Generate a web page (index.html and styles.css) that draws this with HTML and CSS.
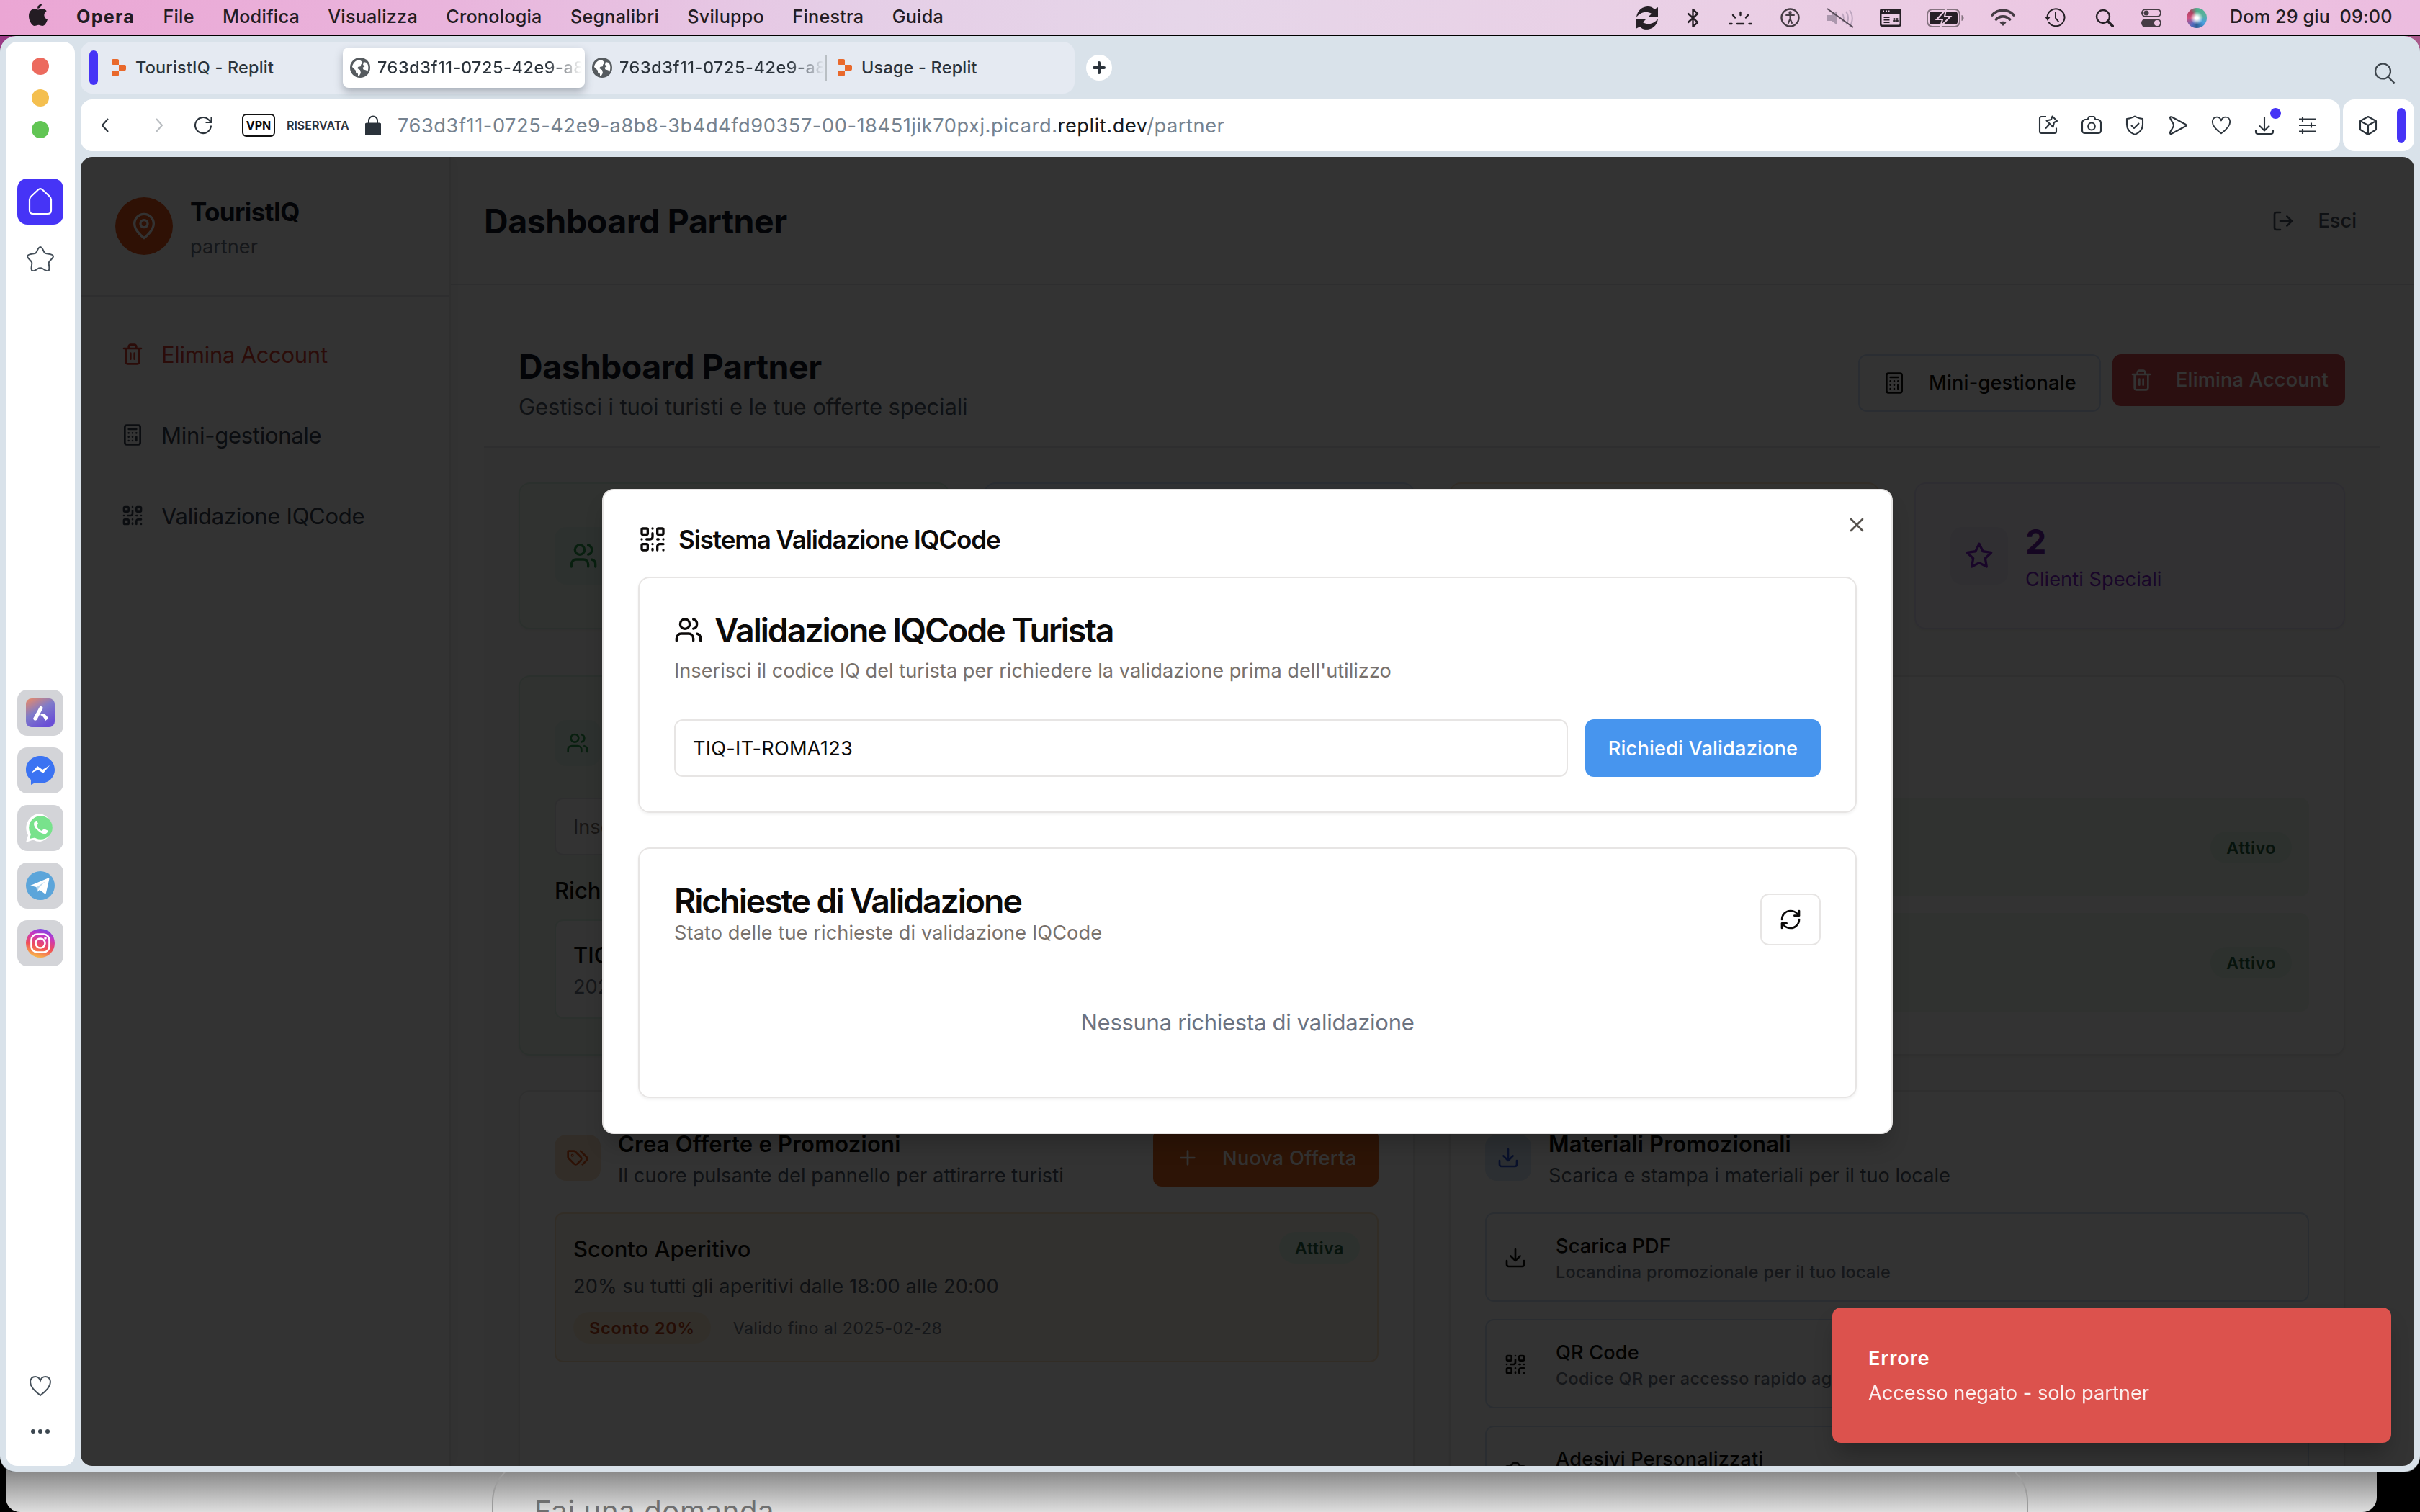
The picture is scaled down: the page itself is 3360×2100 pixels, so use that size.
FILE: index.html
```html
<!DOCTYPE html>
<html lang="it">
<head>
<meta charset="utf-8">
<title>Dashboard Partner</title>
<link rel="stylesheet" href="styles.css">
</head>
<body>
<svg class="defs" aria-hidden="true">
  <symbol id="qr" viewBox="0 0 24 24"><rect x="3" y="3" width="5" height="5" rx="1"/><rect x="16" y="3" width="5" height="5" rx="1"/><rect x="3" y="16" width="5" height="5" rx="1"/><path d="M21 16h-3a2 2 0 0 0-2 2v3M21 21v.01M12 7v3a2 2 0 0 1-2 2H7M3 12h.01M12 3h.01M12 16v.01M16 12h1M21 12v.01M12 21v-1"/></symbol>
  <symbol id="users" viewBox="0 0 24 24"><path d="M16 21v-2a4 4 0 0 0-4-4H6a4 4 0 0 0-4 4v2"/><circle cx="9" cy="7" r="4"/><path d="M22 21v-2a4 4 0 0 0-3-3.87M16 3.13a4 4 0 0 1 0 7.75"/></symbol>
  <symbol id="trash" viewBox="0 0 24 24"><path d="M3 6h18M19 6v14c0 1-1 2-2 2H7c-1 0-2-1-2-2V6M8 6V4c0-1 1-2 2-2h4c1 0 2 1 2 2v2M10 11v6M14 11v6"/></symbol>
  <symbol id="calc" viewBox="0 0 24 24"><rect x="4" y="2" width="16" height="20" rx="2"/><path d="M8 6h8M16 14v4M16 10h.01M12 10h.01M8 10h.01M12 14h.01M8 14h.01M12 18h.01M8 18h.01"/></symbol>
  <symbol id="tags" viewBox="0 0 24 24"><path d="m15 5 6.3 6.3a2.4 2.4 0 0 1 0 3.4L17 19"/><path d="M9.586 5.586A2 2 0 0 0 8.172 5H3a1 1 0 0 0-1 1v5.172a2 2 0 0 0 .586 1.414L8.29 18.29a2.426 2.426 0 0 0 3.42 0l3.58-3.58a2.426 2.426 0 0 0 0-3.42z"/><circle cx="6.5" cy="9.5" r=".5"/></symbol>
  <symbol id="download" viewBox="0 0 24 24"><path d="M21 15v4a2 2 0 0 1-2 2H5a2 2 0 0 1-2-2v-4M7 10l5 5 5-5M12 15V3"/></symbol>
  <symbol id="logout" viewBox="0 0 24 24"><path d="M9 21H5a2 2 0 0 1-2-2V5a2 2 0 0 1 2-2h4M16 17l5-5-5-5M21 12H9"/></symbol>
  <symbol id="pin" viewBox="0 0 24 24"><path d="M20 10c0 6-8 12-8 12s-8-6-8-12a8 8 0 0 1 16 0Z"/><circle cx="12" cy="10" r="3"/></symbol>
  <symbol id="refresh" viewBox="0 0 24 24"><path d="M3 12a9 9 0 0 1 9-9 9.75 9.75 0 0 1 6.74 2.74L21 8M21 3v5h-5M21 12a9 9 0 0 1-9 9 9.75 9.75 0 0 1-6.74-2.74L3 16M8 16H3v5"/></symbol>
  <symbol id="star" viewBox="0 0 24 24"><path d="M12 2l3.09 6.26L22 9.27l-5 4.87 1.18 6.88L12 17.77l-6.18 3.25L7 14.14 2 9.27l6.91-1.01z"/></symbol>
  <symbol id="camera" viewBox="0 0 24 24"><path d="M14.5 4h-5L7 7H4a2 2 0 0 0-2 2v9a2 2 0 0 0 2 2h16a2 2 0 0 0 2-2V9a2 2 0 0 0-2-2h-3z"/><circle cx="12" cy="13" r="3"/></symbol>
  <symbol id="plus" viewBox="0 0 24 24"><path d="M5 12h14M12 5v14"/></symbol>
  <symbol id="close" viewBox="0 0 24 24"><path d="M18 6 6 18M6 6l12 12"/></symbol>
  <symbol id="heart" viewBox="0 0 32 32"><path d="M16 29C8 23 2 17 2 10.500C2 6 5 3 9 3c3.500 0 6 2.500 7 5.500C17 5.500 19.500 3 23 3c4 0 7 3 7 7.500C30 17 24 23 16 29z"/></symbol>
  <symbol id="globe" viewBox="0 0 28 28"><circle cx="14" cy="14" r="14" fill="#565b5f"/><path d="M13 3C8 3.500 3.500 8 3 13l5 5v2.500l3 2v3l1.500.3 2.500-4.500-1-4-4-2.500 1.500-2 3-.5 1-3 2-2-2-2.500z M19 6l-1 4 2.500 2-3 2 1 2.500 4 1 1.500 2.500C26 16 26 10 23 7z" fill="#fff"/></symbol>
  <symbol id="replit" viewBox="0 0 20 24"><path d="M0 2a2 2 0 0 1 2-2h6a2 2 0 0 1 2 2v6H2a2 2 0 0 1-2-2zM10 8h8a2 2 0 0 1 2 2v4a2 2 0 0 1-2 2h-8zM0 18a2 2 0 0 1 2-2h8v6a2 2 0 0 1-2 2H2a2 2 0 0 1-2-2z" fill="#e9692c"/></symbol>
</svg>

<div class="back-window"><div class="prompt">Fai una domanda</div></div>

<header class="menubar">
  <svg class="apple" viewBox="0 0 26 31"><path d="M18 0c.3 3.500-2.800 6.800-5.800 6.800C11.800 3.500 15 .4 18 0zM13 8.600c1.400 0 3.200-1.500 5.800-1.500 2.500 0 4.700 1.300 5.900 3.200-5 3-4.200 9.800 1.300 11.900C24.500 26.500 22 31 19 31c-2 0-2.900-1.300-5.400-1.300C11 29.700 10 31 8 31 4.500 31 0 24 0 17.300 0 11 3.900 7.300 8 7.300c2.200 0 3.700 1.300 5 1.300z"/></svg>
  <nav class="menus"><b>Opera</b><span>File</span><span>Modifica</span><span>Visualizza</span><span>Cronologia</span><span>Segnalibri</span><span>Sviluppo</span><span>Finestra</span><span>Guida</span></nav>
  <div class="status">
    <svg width="30" height="32" viewBox="0 0 30 32"><path d="M0 15C1 5 9 0 16 0c4 0 7 1.500 9 4l5-3v13H17l4-4C15 6 6 7 0 15zM30 17c-1 10-9 15-16 15-4 0-7-1.500-9-4l-5 2.500V18h13l-4 4c6 4 15 3 21-5z"/></svg>
    <svg width="17" height="28" viewBox="0 0 17 28" class="ln"><path d="M2 8l13 12-6.500 6V2L15 8 2 20"/></svg>
    <svg width="33" height="20" viewBox="0 0 33 20" class="ln"><path d="M1.500 18h3M12 18h9M28.500 18h3M16.500 2v4M6 6l3 3.500M27 6l-3 3.500"/></svg>
    <svg width="27" height="27" viewBox="0 0 27 27" class="ln soft"><circle cx="13.500" cy="13.500" r="12"/><path d="M8 10l11 0M13.500 10v5l-2.500 6M13.500 15l2.500 6" stroke-width="2"/><circle cx="13.500" cy="6.500" r="1"/></svg>
    <svg width="38" height="28" viewBox="0 0 38 28"><path d="M0 10h7l8-6v20l-8-6H0z" fill="#ab97ad"/><path d="M22 8c2 3 2 8 0 12M27 5c4 5 4 13 0 18M32 3c5 7 5 16 0 23" fill="none" stroke="#bda6bf" stroke-width="2"/><path d="M1 1l36 26" stroke="#554a57" stroke-width="2"/></svg>
    <svg width="30" height="25" viewBox="0 0 30 25"><path fill-rule="evenodd" d="M3 0h24a3 3 0 0 1 3 3v19a3 3 0 0 1-3 3H3a3 3 0 0 1-3-3V3a3 3 0 0 1 3-3zM2.500 8v13.500a1 1 0 0 0 1 1h23a1 1 0 0 0 1-1V8z"/><path d="M5.500 12h8M5.500 15.500h8M5.500 19h8" stroke="#262026" stroke-width="1.800"/><path d="M20 13v5M24 13v5M18 14.500h8M18 17h8" stroke="#262026" stroke-width="1.500"/><path d="M4 3.500h2M8 3.500h2M12 3.500h1.500" stroke="#ecd0e6" stroke-width="2"/></svg>
    <svg width="52" height="26" viewBox="0 0 52 26"><rect x="1" y="1" width="45" height="24" rx="7" fill="none" stroke="#84737f" stroke-width="2"/><rect x="4" y="4" width="39" height="18" rx="4"/><path d="M48.500 9v8c4-1 4-7 0-8z" fill="#84737f"/><path d="M27 1L14 15h8l-3 10 14-14h-8z" stroke="#ebcde4" stroke-width="2"/></svg>
    <svg width="34" height="25" viewBox="0 0 34 25" class="ln soft wifi"><path d="M2 9c8-9 22-9 30 0M7.500 15c5-5.500 14-5.500 19 0"/><path d="M12.500 19.500c3-2.500 6-2.500 9 0L17 24z" fill="#453c44" stroke="none"/></svg>
    <svg width="29" height="27" viewBox="0 0 29 27" class="ln"><path d="M3.500 13.500a12 12 0 1 1 2 6.500M15 6v8l4 5" stroke-width="2"/><path d="M0 12h8l-4 6z" fill="#262026" stroke="none"/></svg>
    <svg width="26" height="26" viewBox="0 0 26 26" class="ln"><circle cx="11" cy="11" r="9"/><path d="M17.500 17.500l7 7" stroke-width="3.500"/></svg>
    <svg width="28" height="26" viewBox="0 0 28 26"><rect x="1" y="1" width="26" height="10" rx="5" fill="none" stroke="#453c44" stroke-width="2"/><circle cx="7" cy="6" r="3.500" fill="#453c44"/><rect y="14" width="28" height="12" rx="6" fill="#453c44"/><circle cx="22" cy="20" r="4" fill="#ecc5e1"/></svg>
    <i class="siri"></i>
  </div>
  <time class="clock">Dom 29 giu&nbsp; 09:00</time>
</header>

<div class="browser">
  <aside class="rail">
    <i class="light red"></i><i class="light yellow"></i><i class="light green"></i>
    <div class="home"><svg width="34" height="38" viewBox="0 0 34 38"><path d="M2 16.500C2 13 4 12 6 10l8-7.500c2-1.800 4-1.800 6 0L28 10c2 2 4 3 4 6.500V31c0 3.500-1.500 5-5 5H7c-3.500 0-5-1.500-5-5z"/></svg></div>
    <svg class="fav" width="38" height="36" viewBox="0 0 38 36"><path d="M19 2c2 0 3 2 4.500 5.500 1.500 3.500 2 3.500 6 4 5.500.7 7.500 1.500 7.500 3.500s-2 3.500-4.500 6c-2 2-2 3-1.500 6.500.6 4 1 6.500-1 7.500s-4-.5-7-2.500c-3-1.800-5-1.800-8 0-3 2-5 3.500-7 2.500s-1.600-3.500-1-7.500C7.500 24 7.500 23 5.500 21 3 18.500 1 17 1 15s2-2.800 7.500-3.500c4-.5 4.500-.5 6-4C16 4 17 2 19 2z"/></svg>
    <div class="apps">
      <span class="app"><svg viewBox="0 0 40 40"><defs><linearGradient id="aria" x1="0" y1="0" x2=".6" y2="1"><stop offset="0" stop-color="#ee8a62"/><stop offset=".5" stop-color="#7f7bc9"/><stop offset="1" stop-color="#6a4fd6"/></linearGradient></defs><rect width="40" height="40" rx="8" fill="url(#aria)"/><path d="M10 28L20 10l4 3-9 17q-4 2-5-2zM22 21q6 0 9 7l-4 3q-3-7-7-8z" fill="#fff"/></svg></span>
      <span class="app"><svg viewBox="0 0 40 40"><path d="M20 0C9 0 0 8 0 19c0 6 2.500 10.500 7 14v7l6-3c2 .7 4.500 1 7 1 11 0 20-8 20-19S31 0 20 0z" fill="#3b73f2"/><path d="M7 24l9-10 7 5 10-6-9 11-7-5z" fill="#fff"/></svg></span>
      <span class="app"><svg viewBox="0 0 40 40"><path d="M20 0a20 20 0 0 1 0 39c-4 0-7-.8-10-2.500L0 40l3-10A20 20 0 0 1 20 0z" fill="#fff"/><circle cx="20.500" cy="19.500" r="16.300" fill="#78e28c"/><path d="M5 35l3-10 7 8z" fill="#78e28c"/><path d="M14 10c-4 2-4 7 1 12s11 8 14 5c2-2 1-4 0-4l-4-2-3 3c-3-1-6-4-7-7l2-3-2-4z" fill="#fff"/></svg></span>
      <span class="app"><svg viewBox="0 0 40 40"><circle cx="20" cy="20" r="20" fill="#5ca5da"/><path d="M6 20L31 9.500c1 0 1.500.5 1.300 1.500L28 30c-.5 1.500-1 1.500-2.500.7L19 26l-3.500 3-1-7z" fill="#fff"/><path d="M15 22l12-8-9 9-2 6z" fill="#b9d8ee"/></svg></span>
      <span class="app"><svg viewBox="0 0 40 40"><defs><linearGradient id="insta" x1=".3" y1="1" x2=".6" y2="0"><stop offset="0" stop-color="#f8c048"/><stop offset=".4" stop-color="#f04e58"/><stop offset=".75" stop-color="#c838c0"/><stop offset="1" stop-color="#7b46e8"/></linearGradient></defs><circle cx="20" cy="20" r="20" fill="url(#insta)"/><g fill="none" stroke="#fff" stroke-width="2.600"><rect x="7.500" y="7.500" width="25" height="25" rx="8"/><circle cx="20" cy="20" r="6.500"/></g><circle cx="27" cy="13" r="1.800" fill="#fff"/></svg></span>
    </div>
    <svg class="rail-heart" width="34" height="32"><use href="#heart"/></svg>
    <svg class="dots" width="26" height="6"><circle cx="3" cy="3" r="3"/><circle cx="13" cy="3" r="3"/><circle cx="23" cy="3" r="3"/></svg>
  </aside>

  <div class="stage">
    <div class="tabrow">
      <div class="tabs">
        <i class="space-bar"></i>
        <div class="tab first"><svg width="20" height="24"><use href="#replit"/></svg><span>TouristIQ - Replit</span></div>
        <div class="tab active"><svg width="28" height="28"><use href="#globe"/></svg><span class="host">763d3f11-0725-42e9-a8</span></div>
        <div class="tab second"><svg width="28" height="28"><use href="#globe"/></svg><span class="host">763d3f11-0725-42e9-a8</span></div>
        <div class="tab last"><svg width="20" height="24"><use href="#replit"/></svg><span>Usage - Replit</span></div>
      </div>
      <button class="newtab"><svg width="18" height="18" viewBox="0 0 18 18"><path d="M9 2v14M2 9h14"/></svg></button>
      <svg class="tabsearch" width="30" height="30" viewBox="0 0 30 30"><circle cx="12.500" cy="12" r="10.500"/><path d="M20 20l8.500 8.500"/></svg>
    </div>

    <div class="addressrow">
      <div class="address">
        <svg class="nav-back" viewBox="0 0 28 28"><path d="M18 5l-8 9 8 9"/></svg>
        <svg class="nav-fwd" viewBox="0 0 28 28"><path d="M10 5l8 9-8 9"/></svg>
        <svg class="nav-reload" viewBox="0 0 28 28"><path d="M25 14.500A11 11 0 1 1 22 6.500l3 3M25.500 2v8h-8"/></svg>
        <span class="vpn">VPN</span><span class="private">RISERVATA</span>
        <svg class="lock" viewBox="0 0 22 28"><path d="M5 13V7.500a6 6 0 0 1 12 0V13" fill="none" stroke="#2b333b" stroke-width="2"/><rect y="11.500" width="22" height="16" rx="3" fill="#2b333b"/></svg>
        <span class="url">763d3f11-0725-42e9-a8b8-3b4d4fd90357-00-18451jik70pxj.picard.<em>replit.dev</em>/partner</span>
        <div class="tools">
          <svg viewBox="0 0 28 28"><path d="M11 2H4.500Q2 2 2 4.500v18Q2 25 4.500 25h18q2.500 0 2.500-2.500V17.500M19.500 1.500l6.500 6.500-4 2-1.500 6.500-9-9L18 6zM15.500 12.500L10 18.500"/></svg>
          <svg viewBox="0 0 28 28"><path d="M8.500 6l2-4h7l2 4H23q4 1 4 5v10q0 4-4 4H5q-4 0-4-4V11q0-4 4-5z"/><ellipse cx="14" cy="15.500" rx="4.800" ry="5"/></svg>
          <svg viewBox="0 0 28 28"><path d="M14 1.500c3 2 6.500 3 11 3.500v8c0 7-5 11.500-11 14C8 24.500 3 20 3 13V5c4.500-.5 8-1.500 11-3.500z"/><path d="M9 14l4 4 7-7"/></svg>
          <svg viewBox="0 0 28 28"><path d="M3 3.500c0-1.500 1-1.500 2.500-1L25 13q1.500 1 0 2L5.500 25.500C3.500 26.500 3 26 3 24.500c.5-4 5-7 5-10.500S3.500 7 3 3.500z"/></svg>
          <svg viewBox="0 0 32 32"><use href="#heart"/></svg>
          <span class="dl"><svg viewBox="0 0 28 28"><path d="M14 2v19M7 14.500l7 7 7-7M2 20v3q0 3 3 3h18q3 0 3-3v-3"/></svg><i></i></span>
          <svg viewBox="0 0 28 28"><path d="M2 5.500h24M2 14h24M2 22.500h24M7 2v7M19 10.500v7M7 19v7"/></svg>
        </div>
      </div>
      <div class="sidepanel">
        <svg width="26" height="28" viewBox="0 0 26 28"><path d="M13 2l11 6v12l-11 7L2 20V8zM2 8l11 6 11-6M13 14v13"/></svg>
        <i class="space-bar"></i>
      </div>
    </div>

    <div class="page">
      <aside class="sidebar">
        <div class="brand">
          <span class="logo"><svg class="ic i40"><use href="#pin"/></svg></span>
          <div><div class="brand-name">TouristIQ</div><div class="brand-role">partner</div></div>
        </div>
        <nav class="side-nav">
          <a class="danger"><svg class="ic i32"><use href="#trash"/></svg>Elimina Account</a>
          <a><svg class="ic i32"><use href="#calc"/></svg>Mini-gestionale</a>
          <a><svg class="ic i32"><use href="#qr"/></svg>Validazione IQCode</a>
        </nav>
      </aside>
      <main class="main">
        <div class="topbar"><h1>Dashboard Partner</h1><div class="logout"><svg class="ic i32"><use href="#logout"/></svg>Esci</div></div>
        <div class="panel">
          <div class="panel-head">
            <div><h2>Dashboard Partner</h2><p>Gestisci i tuoi turisti e le tue offerte speciali</p></div>
            <div class="actions">
              <button class="btn outline"><svg class="ic i32"><use href="#calc"/></svg>Mini-gestionale</button>
              <button class="btn destructive"><svg class="ic i32"><use href="#trash"/></svg>Elimina Account</button>
            </div>
          </div>
          <div class="panel-body">
            <div class="stats">
              <div class="stat green"><span class="tile t80"><svg class="ic i40"><use href="#users"/></svg></span></div>
              <div class="stat blue"></div>
              <div class="stat orange"></div>
              <div class="stat purple"><span class="tile t80"><svg class="ic i40"><use href="#star"/></svg></span><div><div class="num">2</div><div class="lbl">Clienti Speciali</div></div></div>
            </div>
            <div class="grid">
              <section class="card greencard">
                <div class="card-head"><span class="tile"><svg class="ic i32"><use href="#users"/></svg></span></div>
                <div class="field">Inserisci</div>
                <div class="field-title">Richieste</div>
                <div class="request"><div>TIQ-IT</div><small>2025</small></div>
              </section>
              <section class="card">
                <div class="card-head"></div>
                <div class="rows"><div class="row"><span class="pill ok">Attivo</span></div><div class="row"><span class="pill ok">Attivo</span></div></div>
              </section>
              <section class="card tall">
                <div class="card-head"><span class="tile orange"><svg class="ic i32"><use href="#tags"/></svg></span><div class="heads"><h3>Crea Offerte e Promozioni</h3><p class="wide">Il cuore pulsante del pannello per attirarre turisti</p></div><button class="btn primary"><svg class="ic i32"><use href="#plus"/></svg>Nuova Offerta</button></div>
                <div class="offer">
                  <div class="offer-top"><div class="offer-name">Sconto Aperitivo</div><span class="pill ok">Attiva</span></div>
                  <p>20% su tutti gli aperitivi dalle 18:00 alle 20:00</p>
                  <div class="offer-meta"><span class="pill discount">Sconto 20%</span><span>Valido fino al 2025-02-28</span></div>
                </div>
              </section>
              <section class="card tall">
                <div class="card-head"><span class="tile bluetile"><svg class="ic i32"><use href="#download"/></svg></span><div class="heads"><h3>Materiali Promozionali</h3><p>Scarica e stampa i materiali per il tuo locale</p></div></div>
                <div class="materials">
                  <div class="material"><svg class="ic i32"><use href="#download"/></svg><div><b>Scarica PDF</b><small>Locandina promozionale per il tuo locale</small></div></div>
                  <div class="material"><svg class="ic i32"><use href="#qr"/></svg><div><b>QR Code</b><small>Codice QR per accesso rapido agli sconti</small></div></div>
                  <div class="material"><svg class="ic i32"><use href="#camera"/></svg><div><b>Adesivi Personalizzati</b><small>&nbsp;</small></div></div>
                </div>
              </section>
            </div>
          </div>
        </div>
      </main>

      <div class="overlay"></div>
      <div class="dialog">
        <svg class="ic i32 x"><use href="#close"/></svg>
        <div class="dialog-title"><svg class="ic i40"><use href="#qr"/></svg>Sistema Validazione IQCode</div>
        <section class="box">
          <h4><svg class="ic i40"><use href="#users"/></svg>Validazione IQCode Turista</h4>
          <p class="mt">Inserisci il codice IQ del turista per richiedere la validazione prima dell'utilizzo</p>
          <div class="form"><div class="input">TIQ-IT-ROMA123</div><button class="validate">Richiedi Validazione</button></div>
        </section>
        <section class="box second-box">
          <div class="box-head"><div><h4>Richieste di Validazione</h4><p>Stato delle tue richieste di validazione IQCode</p></div><button class="reload"><svg class="ic i32"><use href="#refresh"/></svg></button></div>
          <div class="empty">Nessuna richiesta di validazione</div>
        </section>
      </div>
      <div class="toast"><b>Errore</b><span>Accesso negato - solo partner</span></div>
    </div>
  </div>
</div>
</body>
</html>
```
FILE: styles.css
```css
* { box-sizing: border-box; margin: 0; padding: 0; }
body { width: 3360px; height: 2100px; overflow: hidden; position: relative; background: linear-gradient(90deg, #9a3a86, #000 600px, #000 2900px, #a9588a 3350px) top / 100% 100px no-repeat, #000; font-family: Inter, "Liberation Sans", sans-serif; color: #0c0a09; }
button { font: inherit; border: 0; background: none; color: inherit; }
svg { flex: none; display: block; }
.defs { position: absolute; width: 0; height: 0; }
.ic { fill: none; stroke: currentColor; stroke-width: 2; stroke-linecap: round; stroke-linejoin: round; }
.i32 { width: 32px; height: 32px; }
.i40 { width: 40px; height: 40px; }

/* window peeking out at the bottom of the desktop */
.back-window { position: absolute; left: 8px; top: 1900px; width: 3292px; height: 200px; border-radius: 0 0 20px 20px; background: linear-gradient(#8a8a8a 144px, #b4b4b4 172px, #dedede 200px); overflow: hidden; }
.prompt { position: absolute; left: 675px; top: 126px; width: 2133px; height: 160px; border: 2px solid #9c9c9c; border-radius: 60px; padding: 41px 0 0 57px; font-size: 40px; line-height: 60px; letter-spacing: .016em; color: #6f6f6f; }

/* system menu bar */
.menubar { position: relative; height: 50px; padding: 0 38px 2px 40px; border-bottom: 2px solid #000; display: flex; align-items: center; background: linear-gradient(90deg, #eba6d4, #e9b4dc 620px, #e5cde6 1150px, #e6d6e9 1650px, #ebcde4 2600px, #ecbcdf); color: #231c23; font-size: 25.2px; font-weight: 500; letter-spacing: .009em; }
.apple { width: 26px; height: 31px; margin-bottom: 5px; fill: #231c23; }
.menus { display: flex; gap: 39.3px; margin-left: 40px; line-height: 46px; }
.menus b { font-weight: 700; letter-spacing: .05em; }
.status { margin-left: auto; display: grid; grid-template-columns: 69.5px 57.5px 74px 64.5px 74px 66px 87.5px 72px 72px 66px 64px 62px; justify-items: center; align-items: center; fill: #262026; padding-top: 3px; }
.ln { fill: none; stroke: #262026; stroke-width: 2.400; stroke-linecap: round; stroke-linejoin: round; }
.soft { stroke: #453c44; }
.wifi { stroke-width: 3.600; }
.siri { width: 28px; height: 28px; border-radius: 50%; background: radial-gradient(circle, #fff 10%, transparent 45%), conic-gradient(#4fae8c, #5ab0a0 20%, #4a9fe0 35%, #2d5f95 50%, #5a6bc0 60%, #d0507f 75%, #b0405f 88%, #4fae8c); }
.clock { width: 241px; padding-left: 15px; white-space: nowrap; letter-spacing: .005em; line-height: 46px; }

/* browser frame */
.browser { position: absolute; left: 0; top: 50px; width: 3360px; height: 1994px; border-radius: 22px; background: #d9e2ea; padding: 8px; display: flex; gap: 8px; box-shadow: 0 1px 0 #6d7174; }
.rail { width: 96px; background: #fff; border-radius: 16px; display: flex; flex-direction: column; align-items: center; padding: 22px 0 45px; }
.light { width: 24px; height: 24px; border-radius: 50%; margin-bottom: 20px; }
.red { background: #ec6a5e; }
.yellow { background: #f4bf4f; }
.light.green { background: #61c554; }
.home { width: 64px; height: 64px; border-radius: 14px; background: #4634f6; margin-top: 36px; display: grid; place-items: center; }
.home path { fill: none; stroke: #fff; stroke-width: 2.200; }
.fav { margin-top: 29px; }
.fav path, .rail-heart { fill: none; stroke: #46515b; stroke-width: 2; }
.apps { display: flex; flex-direction: column; gap: 16px; margin-top: 581px; }
.app { width: 64px; height: 64px; border-radius: 14px; background: #d3d4d8; display: grid; place-items: center; }
.app svg { width: 40px; height: 40px; }
.rail-heart { margin-top: auto; }
.dots { margin-top: 44px; fill: #3c4750; }

.stage { flex: 1; display: flex; flex-direction: column; gap: 8px; min-width: 0; }
.tabrow { height: 72px; display: flex; align-items: center; padding-right: 26px; }
.tabs { width: 1380px; height: 72px; border-radius: 16px; background: #e5eaf2; display: flex; align-items: center; padding-left: 12px; font-size: 23.4px; font-weight: 500; letter-spacing: .01em; color: #2b333b; }
.tab span { padding-bottom: 1px; }
.space-bar { width: 12px; height: 48px; border-radius: 6px; background: #4634f6; }
.tab { display: flex; align-items: center; height: 56px; white-space: nowrap; }
.first { width: 340px; padding-left: 19px; gap: 13px; }
.active { width: 336px; padding-left: 10px; gap: 10px; background: #fff; border-radius: 8px; box-shadow: 0 6px 12px rgba(60,70,80,.35); }
.second { width: 336px; padding-left: 10px; gap: 10px; position: relative; }
.second::after { content: ""; position: absolute; right: 0; top: 10px; width: 2px; height: 36px; background: #b9bfc4; }
.last { padding-left: 15px; gap: 13px; }
.host { width: 288px; letter-spacing: .025em; mask-image: linear-gradient(90deg, #000 235px, transparent 284px); }
.newtab { width: 36px; height: 36px; border-radius: 50%; background: #fff; margin-left: 16px; display: grid; place-items: center; }
.newtab path { stroke: #2b333b; stroke-width: 4; stroke-linecap: round; }
.tabsearch { margin: 15px 0 0 auto; fill: none; stroke: #3d454c; stroke-width: 2.200; }
.addressrow { height: 72px; display: flex; gap: 4px; }
.address { width: 3137px; background: #fff; border-radius: 16px; display: flex; align-items: center; padding: 0 31px 0 20px; }
.address svg, .sidepanel svg { fill: none; stroke: #2b333b; stroke-width: 2.100; stroke-linejoin: round; }
.nav-back, .nav-fwd, .nav-reload, .tools svg { width: 28px; height: 28px; }
.nav-fwd { margin-left: 47px; }
.address .nav-fwd { stroke: #b9bdc1; }
.nav-reload { margin-left: 33px; }
.vpn { margin-left: 40px; width: 46px; height: 32px; border: 2px solid #111; border-radius: 6px; font-size: 16px; font-weight: 700; line-height: 28px; text-align: center; }
.private { margin-left: 16px; width: 88px; font-size: 16px; font-weight: 600; white-space: nowrap; color: #2b333b; }
.lock { width: 22px; height: 28px; margin-left: 21px; }
.url { margin-left: 23px; font-size: 27.2px; letter-spacing: .021em; color: #75828f; white-space: nowrap; }
.url em { font-style: normal; color: #15191d; }
.tools { margin-left: auto; display: flex; gap: 32px; }
.dl { position: relative; }
.dl i { position: absolute; left: 22px; top: -10px; width: 15px; height: 15px; border-radius: 50%; background: #4634f6; }
.sidepanel { width: 99px; background: #fff; border-radius: 16px; display: flex; align-items: center; padding: 0 12px 0 22px; justify-content: space-between; }

/* web page */
.page { position: relative; flex: 1; background: #fff; border-radius: 16px; overflow: hidden; display: flex; }
.sidebar { width: 514px; border-right: 2px solid #e9eaec; box-shadow: 8px 0 16px rgba(0,0,0,.04); z-index: 0; }
.brand { height: 194px; border-bottom: 2px solid #e5e7eb; padding-left: 48px; display: flex; align-items: center; gap: 24px; }
.logo { width: 80px; height: 80px; border-radius: 50%; background: #e8571c; color: #fff; display: grid; place-items: center; }
.brand-name { font-size: 35px; font-weight: 700; line-height: 56px; letter-spacing: -.018em; color: #111827; }
.brand-role { font-size: 27.2px; line-height: 40px; padding-top: 1px; margin-bottom: -1px; color: #6b7280; }
.side-nav { padding: 40px 56px; display: flex; flex-direction: column; gap: 32px; }
.side-nav a { height: 80px; display: flex; align-items: center; gap: 24px; font-size: 31px; letter-spacing: -.009em; color: #374151; }
.side-nav .danger { color: #d63c2e; }
.main { flex: 1; padding-right: 48px; min-width: 0; }
.topbar { height: 178px; margin-right: -48px; padding: 1px 80px 0 46px; border-bottom: 2px solid #e5e7eb; display: flex; align-items: center; justify-content: space-between; }
h1, h2 { font-size: 46.5px; font-weight: 700; letter-spacing: -.009em; line-height: 64px; color: #111827; }
.logout { display: flex; align-items: center; gap: 32px; font-size: 27.2px; font-weight: 500; color: #4b5563; }
.panel { margin-left: 46px; }
.panel-head { height: 226px; padding: 81px 48px 31px; border-bottom: 2px solid #e5e7eb; display: flex; align-items: center; justify-content: space-between; }
.panel-head p { font-size: 31px; line-height: 48px; letter-spacing: -.004em; color: #4b5563; }
.actions { display: flex; align-items: flex-start; gap: 16px; margin-bottom: 3px; }
.btn { display: flex; align-items: center; height: 72px; border-radius: 12px; font-size: 27.2px; font-weight: 500; letter-spacing: .007em; white-space: nowrap; }
.outline { width: 337px; height: 80px; border: 2px solid #cfe0fa; padding-left: 32px; gap: 32px; }
.destructive { width: 323px; padding-left: 24px; gap: 32px; background: #d84b4f; color: #fff; }
.panel-body { background: #fafaf9; padding: 48px; }
.stats { display: grid; grid-template-columns: repeat(4, 1fr); gap: 48px; margin-bottom: 64px; }
.stat { height: 204px; border: 2px solid; border-radius: 16px; padding-left: 48px; display: flex; align-items: center; gap: 24px; box-shadow: 0 2px 4px rgba(0,0,0,.06); }
.stat.green { background: #f1f8ef; border-color: #d5f0de; }
.stat.blue { background: #eff6ff; border-color: #cfe0fa; }
.stat.orange { background: #fff7ed; border-color: #fbe0c4; }
.stat.purple { background: #f8f5fd; border-color: #e6e0f8; color: #7e22ce; }
.stat.purple .tile { background: #f0ebfb; color: #7e22ce; }
.num { font-size: 46.5px; font-weight: 700; line-height: 64px; color: #6b21a8; }
.lbl { font-size: 27.2px; line-height: 40px; padding-top: 1px; margin-bottom: -1px; letter-spacing: .002em; }
.tile { width: 64px; height: 64px; border-radius: 16px; flex: none; display: grid; place-items: center; background: #e2f4e8; color: #2c9a4c; }
.t80 { width: 80px; height: 80px; }
.tile.orange { background: #fbe2c8; color: #e0551a; }
.tile.bluetile { background: #dbe9f8; color: #2d55d8; }
.grid { display: grid; grid-template-columns: 1fr 1fr; gap: 48px; }
.card { height: 528px; border: 2px solid #e8eaec; border-radius: 16px; background: #fff; padding: 48px; box-shadow: 0 2px 4px rgba(0,0,0,.06); }
.greencard { background: #f1f8ef; border-color: #d5f0de; }
.tall { height: 900px; }
.card-head { height: 88px; margin-bottom: 32px; display: flex; align-items: center; gap: 24px; }
.heads { flex: 1; padding-top: 1px; }
h3 { font-size: 31px; font-weight: 600; line-height: 48px; letter-spacing: .007em; color: #0c0a09; }
.heads p { font-size: 27.2px; line-height: 40px; letter-spacing: 0; color: #4b5563; }
.heads .wide { letter-spacing: .003em; }
.primary { width: 313px; height: 80px; background: #e2661f; color: #fff; padding-left: 32px; gap: 32px; letter-spacing: .012em; }
.field { height: 80px; border: 2px solid #e5e7eb; border-radius: 12px; background: #fff; padding: 19px 24px 0; font-size: 27.2px; line-height: 40px; color: #78716c; margin-bottom: 25px; }
.field-title { font-size: 31px; font-weight: 500; line-height: 48px; margin-bottom: 16px; }
.request { height: 138px; border: 2px solid #dcf2e3; border-radius: 12px; background: #fff; padding: 24px; font-size: 31px; line-height: 48px; font-weight: 500; }
.request small { display: block; font-size: 27.2px; line-height: 40px; font-weight: 400; color: #6b7280; }
.rows { display: flex; flex-direction: column; gap: 23px; }
.row { height: 137px; border-radius: 12px; background: #f1f8ef; padding-right: 24px; display: flex; align-items: center; justify-content: flex-end; }
.pill { height: 44px; border-radius: 22px; padding: 0 22px; font-size: 23.4px; line-height: 45px; font-weight: 600; letter-spacing: .02em; white-space: nowrap; }
.ok { background: #e0f3e6; color: #24603c; }
.offer { height: 208px; border: 2px solid #fadfbf; border-radius: 12px; background: #fbf4e9; padding: 25px 24px 23px; }
.offer-top { display: flex; justify-content: space-between; align-items: flex-start; margin-bottom: 8px; }
.offer-name { font-size: 31px; font-weight: 500; line-height: 48px; }
.offer p { font-size: 27.2px; line-height: 40px; letter-spacing: .005em; color: #4b5563; margin-bottom: 15px; }
.offer-meta { display: flex; align-items: center; gap: 31px; font-size: 23.4px; letter-spacing: .01em; color: #6b7280; }
.discount { background: #fbebd3; color: #b8441a; letter-spacing: .033em; }
.materials { display: flex; flex-direction: column; gap: 24px; }
.material { height: 124px; border: 2px solid #cfe0f4; border-radius: 12px; padding: 1px 0 0 24px; display: flex; align-items: center; gap: 40px; }
.material b, .material small { display: block; font-weight: 500; }
.material b { font-size: 27.2px; line-height: 40px; letter-spacing: .005em; }
.material small { font-size: 23.4px; line-height: 32px; letter-spacing: .015em; color: #6b7280; }

.overlay { position: absolute; inset: 0; background: rgba(0,0,0,.8); }
.dialog { position: absolute; left: 724px; top: 461px; width: 1792px; height: 896px; border: 2px solid #e7e5e4; border-radius: 16px; background: #fff; padding: 48px; box-shadow: 0 20px 30px -6px rgba(0,0,0,.2); }
.x { position: absolute; right: 32px; top: 32px; color: #57534e; }
.dialog-title { height: 40px; display: flex; align-items: center; gap: 16px; font-size: 35px; font-weight: 600; letter-spacing: -.032em; margin-bottom: 32px; }
.box { height: 328px; border: 2px solid #e7e5e4; border-radius: 16px; padding: 48px; box-shadow: 0 2px 4px rgba(0,0,0,.06); }
.second-box { height: 348px; margin-top: 48px; }
h4 { display: flex; align-items: center; gap: 16px; font-size: 46.5px; font-weight: 600; line-height: 50px; height: 48px; letter-spacing: -.045em; white-space: nowrap; }
.box p { font-size: 27.2px; line-height: 40px; color: #78716c; letter-spacing: .003em; padding-top: 1px; }
.box .mt { margin: 12px 0 47px; letter-spacing: 0; }
.form { display: flex; gap: 24px; }
.input { flex: 1; height: 80px; border: 2px solid #e7e5e4; border-radius: 12px; padding: 0 24px; line-height: 78px; font-size: 27.2px; letter-spacing: .009em; }
.validate { width: 327px; height: 80px; border-radius: 12px; background: #4795ee; color: #fff; font-size: 27.2px; font-weight: 500; letter-spacing: .006em; }
.box-head { display: flex; justify-content: space-between; align-items: center; height: 88px; }
.reload { width: 84px; height: 72px; border: 2px solid #e7e5e4; border-radius: 12px; display: grid; place-items: center; margin-top: 12px; }
.empty { padding-top: 81px; text-align: center; font-size: 31px; line-height: 48px; letter-spacing: -.009em; color: #6b7280; }
.toast { position: absolute; right: 32px; bottom: 32px; width: 776px; height: 188px; border-radius: 12px; background: #dc524d; color: #fff; padding: 51px 50px 49px; font-size: 27.2px; line-height: 40px; box-shadow: 0 20px 30px -6px rgba(0,0,0,.25); }
.toast b { display: block; font-weight: 600; letter-spacing: .03em; margin-bottom: 8px; }
.toast span { opacity: .9; }
```
